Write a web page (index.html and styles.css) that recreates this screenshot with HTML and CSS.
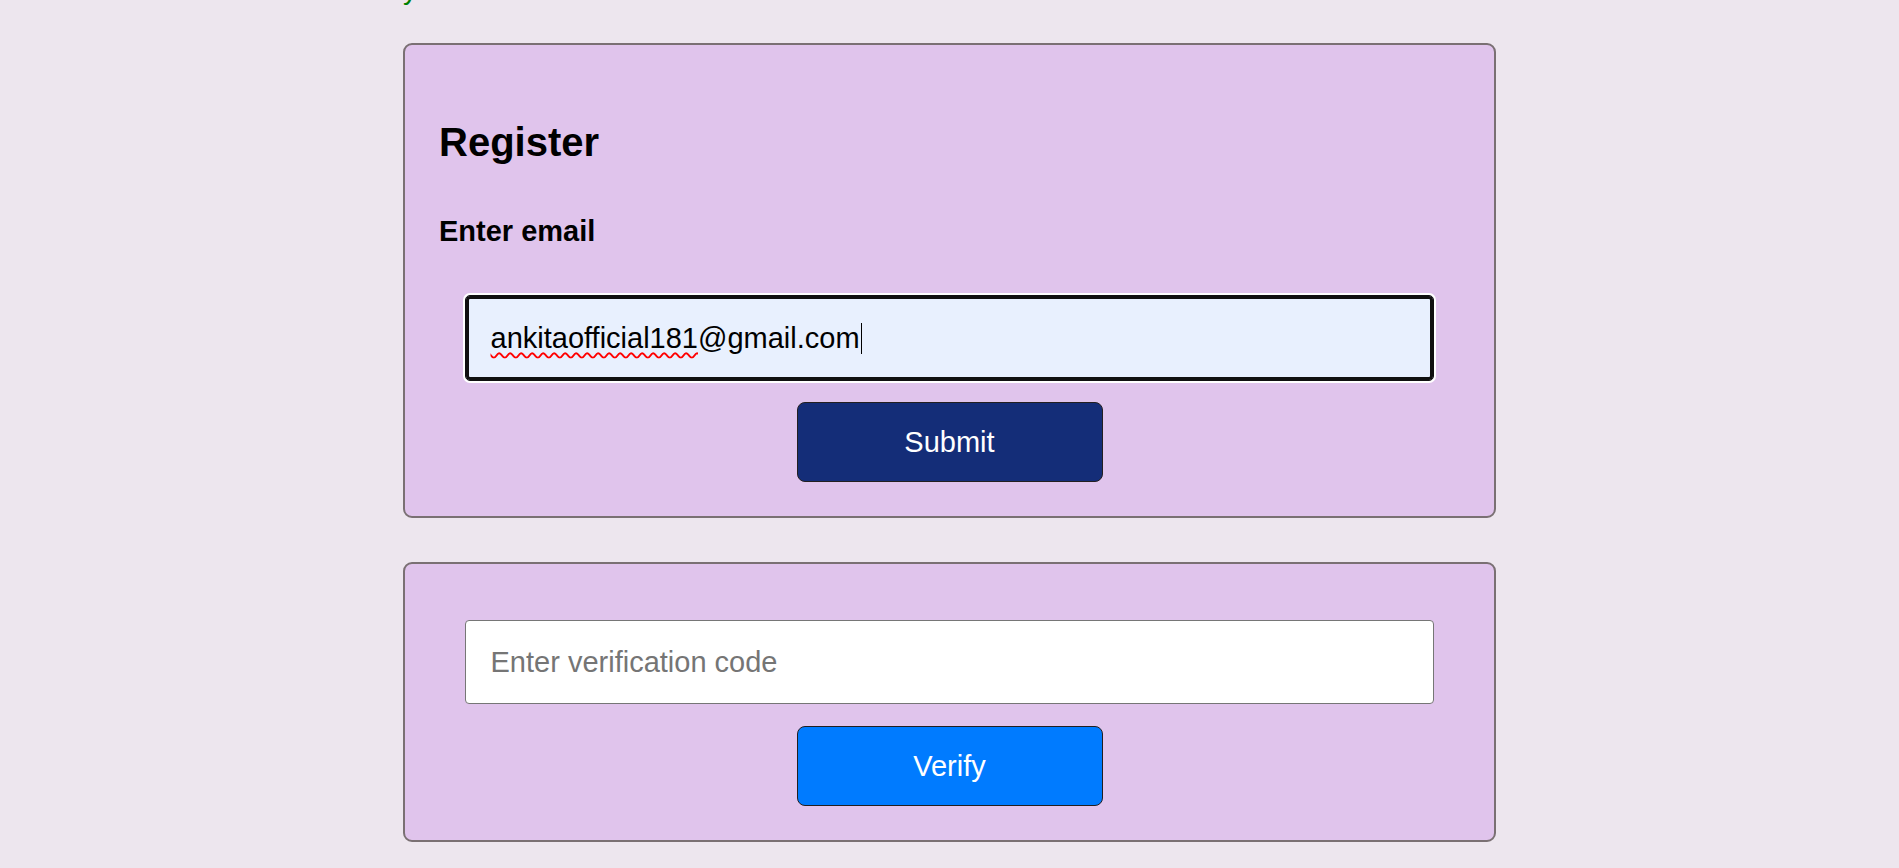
FILE: index.html
```html
<!DOCTYPE html>
<html lang="en">
<head>
<meta charset="utf-8">
<title>Register</title>
<link rel="stylesheet" href="styles.css">
</head>
<body>
<main class="page">
  <p class="msg">your verification code has been sent</p>

  <section class="card card-register">
    <h2 class="title">Register</h2>
    <label class="label" for="email">Enter email</label>
    <div class="field field-email">
      <input id="email" class="input input-focused" type="email" value="ankitaofficial181@gmail.com">
      <span class="overlay" aria-hidden="true"><span class="misspelled">ankitaofficial181</span>@gmail.com<span class="caret"></span></span>
    </div>
    <button class="btn btn-submit" type="button">Submit</button>
  </section>

  <section class="card card-verify">
    <div class="field">
      <input class="input" type="text" placeholder="Enter verification code">
    </div>
    <button class="btn btn-verify" type="button">Verify</button>
  </section>
</main>
</body>
</html>
```

FILE: styles.css
```css
html, body {
  margin: 0;
  padding: 0;
}

body {
  background: #ede6ee;
  font-family: "Liberation Sans", Arial, sans-serif;
  color: #000;
  overflow: hidden;
}

.page {
  width: 1093px;
  margin: 0 auto;
}

.msg {
  margin: -27px 0 0;
  font-size: 29px;
  line-height: 33px;
  height: 33px;
  color: #008000;
  white-space: nowrap;
}

.card {
  background: #e0c4ec;
  border: 2px solid #7a7073;
  border-radius: 9px;
  padding: 34px 34px 34px;
  display: flex;
  flex-direction: column;
}

.card-register {
  margin-top: 37px;
}

.card-verify {
  margin-top: 44px;
}

.title {
  margin: 40px 0 0;
  font-size: 40px;
  line-height: 46px;
  font-weight: bold;
}

.label {
  margin-top: 50px;
  font-size: 29px;
  line-height: 33px;
  font-weight: bold;
}

.field {
  position: relative;
  width: 95%;
  align-self: center;
  margin-top: 22px;
}

.field-email {
  margin-top: 47px;
}

.input {
  display: block;
  width: 100%;
  height: 84px;
  box-sizing: border-box;
  margin: 0;
  padding: 0 25px;
  border: 1px solid #767676;
  border-radius: 4px;
  background: #fff;
  font-family: "Liberation Sans", Arial, sans-serif;
  font-size: 29px;
  color: #000;
  outline: none;
}

.input::placeholder {
  color: #757575;
}

.input-focused {
  height: 86px;
  background: #e8f0fe;
  border-color: #101010;
  box-shadow: inset 0 0 0 3px #101010, 0 0 0 2px #fff;
  border-radius: 5px;
}

.overlay {
  position: absolute;
  left: 26px;
  top: 0;
  height: 86px;
  display: flex;
  align-items: center;
  font-size: 29px;
  color: transparent;
  white-space: pre;
  pointer-events: none;
}

.misspelled {
  text-decoration: underline wavy #ff0000;
  text-decoration-thickness: 2px;
  text-underline-offset: 4px;
}

.caret {
  display: inline-block;
  width: 1px;
  height: 31px;
  background: #000;
  margin-left: 1px;
}

.btn {
  align-self: center;
  width: 306px;
  height: 80px;
  margin-top: 21px;
  border: 1px solid #231f20;
  border-radius: 8px;
  color: #fff;
  font-family: "Liberation Sans", Arial, sans-serif;
  font-size: 29px;
  cursor: pointer;
}

.btn-submit {
  background: #142d78;
}

.btn-verify {
  background: #007bff;
  margin-top: 22px;
}
```
